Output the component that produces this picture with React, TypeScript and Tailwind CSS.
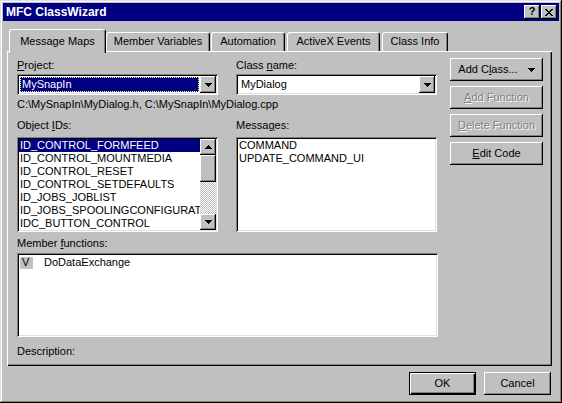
import type { ReactNode } from 'react';

// classic 3D bevels
const raised = 'shadow-[inset_-1px_-1px_0_#000,inset_1px_1px_0_#fff,inset_-2px_-2px_0_#808080]';
const sunken =
  'shadow-[inset_1px_1px_0_#808080,inset_-1px_-1px_0_#fff,inset_2px_2px_0_#000,inset_-2px_-2px_0_#dfdfdf]';
const defaultBtn =
  'shadow-[inset_0_0_0_1px_#000,inset_2px_2px_0_#fff,inset_-2px_-2px_0_#000,inset_-3px_-3px_0_#808080]';

const tabs = [
  { label: 'Message Maps', cls: 'w-[97px]', selected: true },
  { label: 'Member Variables', cls: 'w-[104px]' },
  { label: 'Automation', cls: 'w-[74px] ml-[1px]' },
  { label: 'ActiveX Events', cls: 'w-[93px] ml-[2px]' },
  { label: 'Class Info', cls: 'w-[66px] ml-[2px]' },
];

const objectIds = [
  'ID_CONTROL_FORMFEED',
  'ID_CONTROL_MOUNTMEDIA',
  'ID_CONTROL_RESET',
  'ID_CONTROL_SETDEFAULTS',
  'ID_JOBS_JOBLIST',
  'ID_JOBS_SPOOLINGCONFIGURATION',
  'IDC_BUTTON_CONTROL',
];

function Arrow({ up }: { up?: boolean }) {
  return (
    <svg width="7" height="4" viewBox="0 0 7 4" shapeRendering="crispEdges" className={up ? 'rotate-180' : ''}>
      <rect x="0" y="0" width="7" height="1" fill="#000" />
      <rect x="1" y="1" width="5" height="1" fill="#000" />
      <rect x="2" y="2" width="3" height="1" fill="#000" />
      <rect x="3" y="3" width="1" height="1" fill="#000" />
    </svg>
  );
}

function CloseGlyph() {
  const r: [number, number, number][] = [
    [0, 0, 2], [6, 0, 2], [1, 1, 2], [5, 1, 2], [2, 2, 4], [3, 3, 2],
    [2, 4, 4], [1, 5, 2], [5, 5, 2], [0, 6, 2], [6, 6, 2],
  ];
  return (
    <svg width="8" height="7" viewBox="0 0 8 7" shapeRendering="crispEdges">
      {r.map(([x, y, w], i) => (
        <rect key={i} x={x} y={y} width={w} height="1" fill="#000" />
      ))}
    </svg>
  );
}

function Btn({
  children,
  disabled,
  className = '',
}: {
  children: ReactNode;
  disabled?: boolean;
  className?: string;
}) {
  return (
    <div
      className={`flex h-[23px] items-center justify-center bg-[#c0c0c0] ${raised} ${
        disabled ? 'text-[#808080] [text-shadow:1px_1px_0_#fff]' : ''
      } ${className}`}
    >
      {children}
    </div>
  );
}

function U({ children }: { children: ReactNode }) {
  return <span className="underline underline-offset-[1px]">{children}</span>;
}

function Combo({ children }: { children: ReactNode }) {
  return (
    <div className={`flex h-[21px] w-[201px] bg-white p-[2px] ${sunken}`}>
      <div className="flex-1 p-[1px]">{children}</div>
      <div className={`flex h-[17px] w-[16px] items-center justify-center bg-[#c0c0c0] ${raised}`}>
        <Arrow />
      </div>
    </div>
  );
}

function ScrollBar() {
  return (
    <div className="flex w-[16px] flex-col">
      <div className={`flex h-[16px] items-center justify-center bg-[#c0c0c0] ${raised}`}>
        <Arrow up />
      </div>
      <div className={`h-[27px] bg-[#c0c0c0] ${raised}`} />
      <div className="flex-1 bg-[repeating-conic-gradient(#c0c0c0_0_25%,#fff_0_50%)] bg-[length:2px_2px]" />
      <div className={`flex h-[16px] items-center justify-center bg-[#c0c0c0] ${raised}`}>
        <Arrow />
      </div>
    </div>
  );
}

export default function App() {
  return (
    <div
      className="flex h-[403px] w-[562px] flex-col bg-[#c0c0c0] p-[3px] font-['Liberation_Sans',Arial,sans-serif] text-[11px] leading-[13px] text-black shadow-[inset_-1px_-1px_0_#000,inset_1px_1px_0_#dfdfdf,inset_-2px_-2px_0_#808080,inset_2px_2px_0_#fff]"
    >
      {/* Title bar */}
      <div className="flex h-[18px] items-center bg-[#000080] pl-[3px] pr-[2px]">
        <span className="text-[12px] font-bold text-white">MFC ClassWizard</span>
        <div className="ml-auto flex gap-[1px]">
          <div className={`flex h-[14px] w-[16px] items-center justify-center bg-[#c0c0c0] pb-[1px] font-bold leading-none ${raised}`}>
            ?
          </div>
          <div className={`flex h-[14px] w-[16px] items-center justify-center bg-[#c0c0c0] ${raised}`}>
            <CloseGlyph />
          </div>
        </div>
      </div>

      <div className="px-[4px] pt-[8px]">
        {/* Tabs */}
        <div className="flex h-[22px] items-end pl-[2px]">
          {tabs.map((t) =>
            t.selected ? (
              <div
                key={t.label}
                className={`relative z-10 -mb-[2px] flex h-[24px] justify-center rounded-tl-[3px] rounded-tr-[3px] border-l border-t border-r border-white border-r-black bg-[#c0c0c0] pt-[5px] shadow-[inset_-1px_0_0_#808080] ${t.cls}`}
              >
                {t.label}
              </div>
            ) : (
              <div
                key={t.label}
                className={`flex h-[19px] justify-center rounded-tl-[3px] rounded-tr-[3px] border-l border-t border-r border-white border-r-black pt-[2px] shadow-[inset_-1px_0_0_#808080] ${t.cls}`}
              >
                {t.label}
              </div>
            )
          )}
        </div>

        {/* Tab panel */}
        <div className="flex h-[315px] w-[545px] pl-[10px] pt-[7px] shadow-[inset_1px_1px_0_#fff,inset_-1px_-1px_0_#000,inset_-2px_-2px_0_#808080]">
          <div className="flex w-[421px] flex-col pt-[1px]">
            <div className="flex gap-[18px]">
              <div className="flex flex-col gap-[2px]">
                <div>
                  <U>P</U>roject:
                </div>
                <Combo>
                  <div className="h-full border border-dotted border-[#ffff80] bg-[#000080] pl-[1px] leading-[13px] text-white">
                    MySnapIn
                  </div>
                </Combo>
              </div>
              <div className="flex flex-col gap-[2px]">
                <div>
                  Class <U>n</U>ame:
                </div>
                <Combo>
                  <div className="pl-[2px] pt-[1px]">MyDialog</div>
                </Combo>
              </div>
            </div>

            <div className="mt-[3px] whitespace-nowrap">
              C:\MySnapIn\MyDialog.h, C:\MySnapIn\MyDialog.cpp
            </div>

            <div className="mt-[8px] flex gap-[18px]">
              <div className="flex flex-col gap-[5px]">
                <div>
                  Object <U>I</U>Ds:
                </div>
                <div className={`flex h-[95px] w-[201px] bg-white p-[2px] ${sunken}`}>
                  <div className="min-w-0 flex-1 overflow-hidden">
                    {objectIds.map((id, i) => (
                      <div
                        key={id}
                        className={`h-[13px] whitespace-nowrap pl-[1px] ${i === 0 ? 'bg-[#000080] text-white' : ''}`}
                      >
                        {id}
                      </div>
                    ))}
                  </div>
                  <ScrollBar />
                </div>
              </div>
              <div className="flex flex-col gap-[5px]">
                <div>
                  Messa<U>g</U>es:
                </div>
                <div className={`h-[95px] w-[201px] bg-white p-[2px] pl-[3px] ${sunken}`}>
                  <div>COMMAND</div>
                  <div>UPDATE_COMMAND_UI</div>
                </div>
              </div>
            </div>

            <div className="mt-[5px]">
              Member <U>f</U>unctions:
            </div>
            <div className={`mt-[3px] h-[84px] w-[421px] bg-white px-[3px] pt-[3px] ${sunken}`}>
              <div className="flex h-[13px] items-center">
                <span className="flex h-[12px] w-[13px] items-center bg-[#c0c0c0] pl-[2px]">V</span>
                <span className="ml-[11px]">DoDataExchange</span>
              </div>
            </div>

            <div className="mt-[8px]">Description:</div>
          </div>

          {/* Right-hand buttons */}
          <div className="ml-[12px] flex w-[93px] flex-col gap-[5px]">
            <Btn>
              <span>
                Add C<U>l</U>ass...
              </span>
              <span className="ml-[10px] flex">
                <Arrow />
              </span>
            </Btn>
            <Btn disabled>
              <span>
                <U>A</U>dd Function
              </span>
            </Btn>
            <Btn disabled>
              <span>
                <U>D</U>elete Function
              </span>
            </Btn>
            <Btn>
              <span>
                <U>E</U>dit Code
              </span>
            </Btn>
          </div>
        </div>
      </div>

      {/* Footer */}
      <div className="mt-[6px] flex justify-end gap-[8px] pr-[8px]">
        <div className={`flex h-[23px] w-[67px] items-center justify-center bg-[#c0c0c0] ${defaultBtn}`}>OK</div>
        <Btn className="w-[67px]">Cancel</Btn>
      </div>
    </div>
  );
}
